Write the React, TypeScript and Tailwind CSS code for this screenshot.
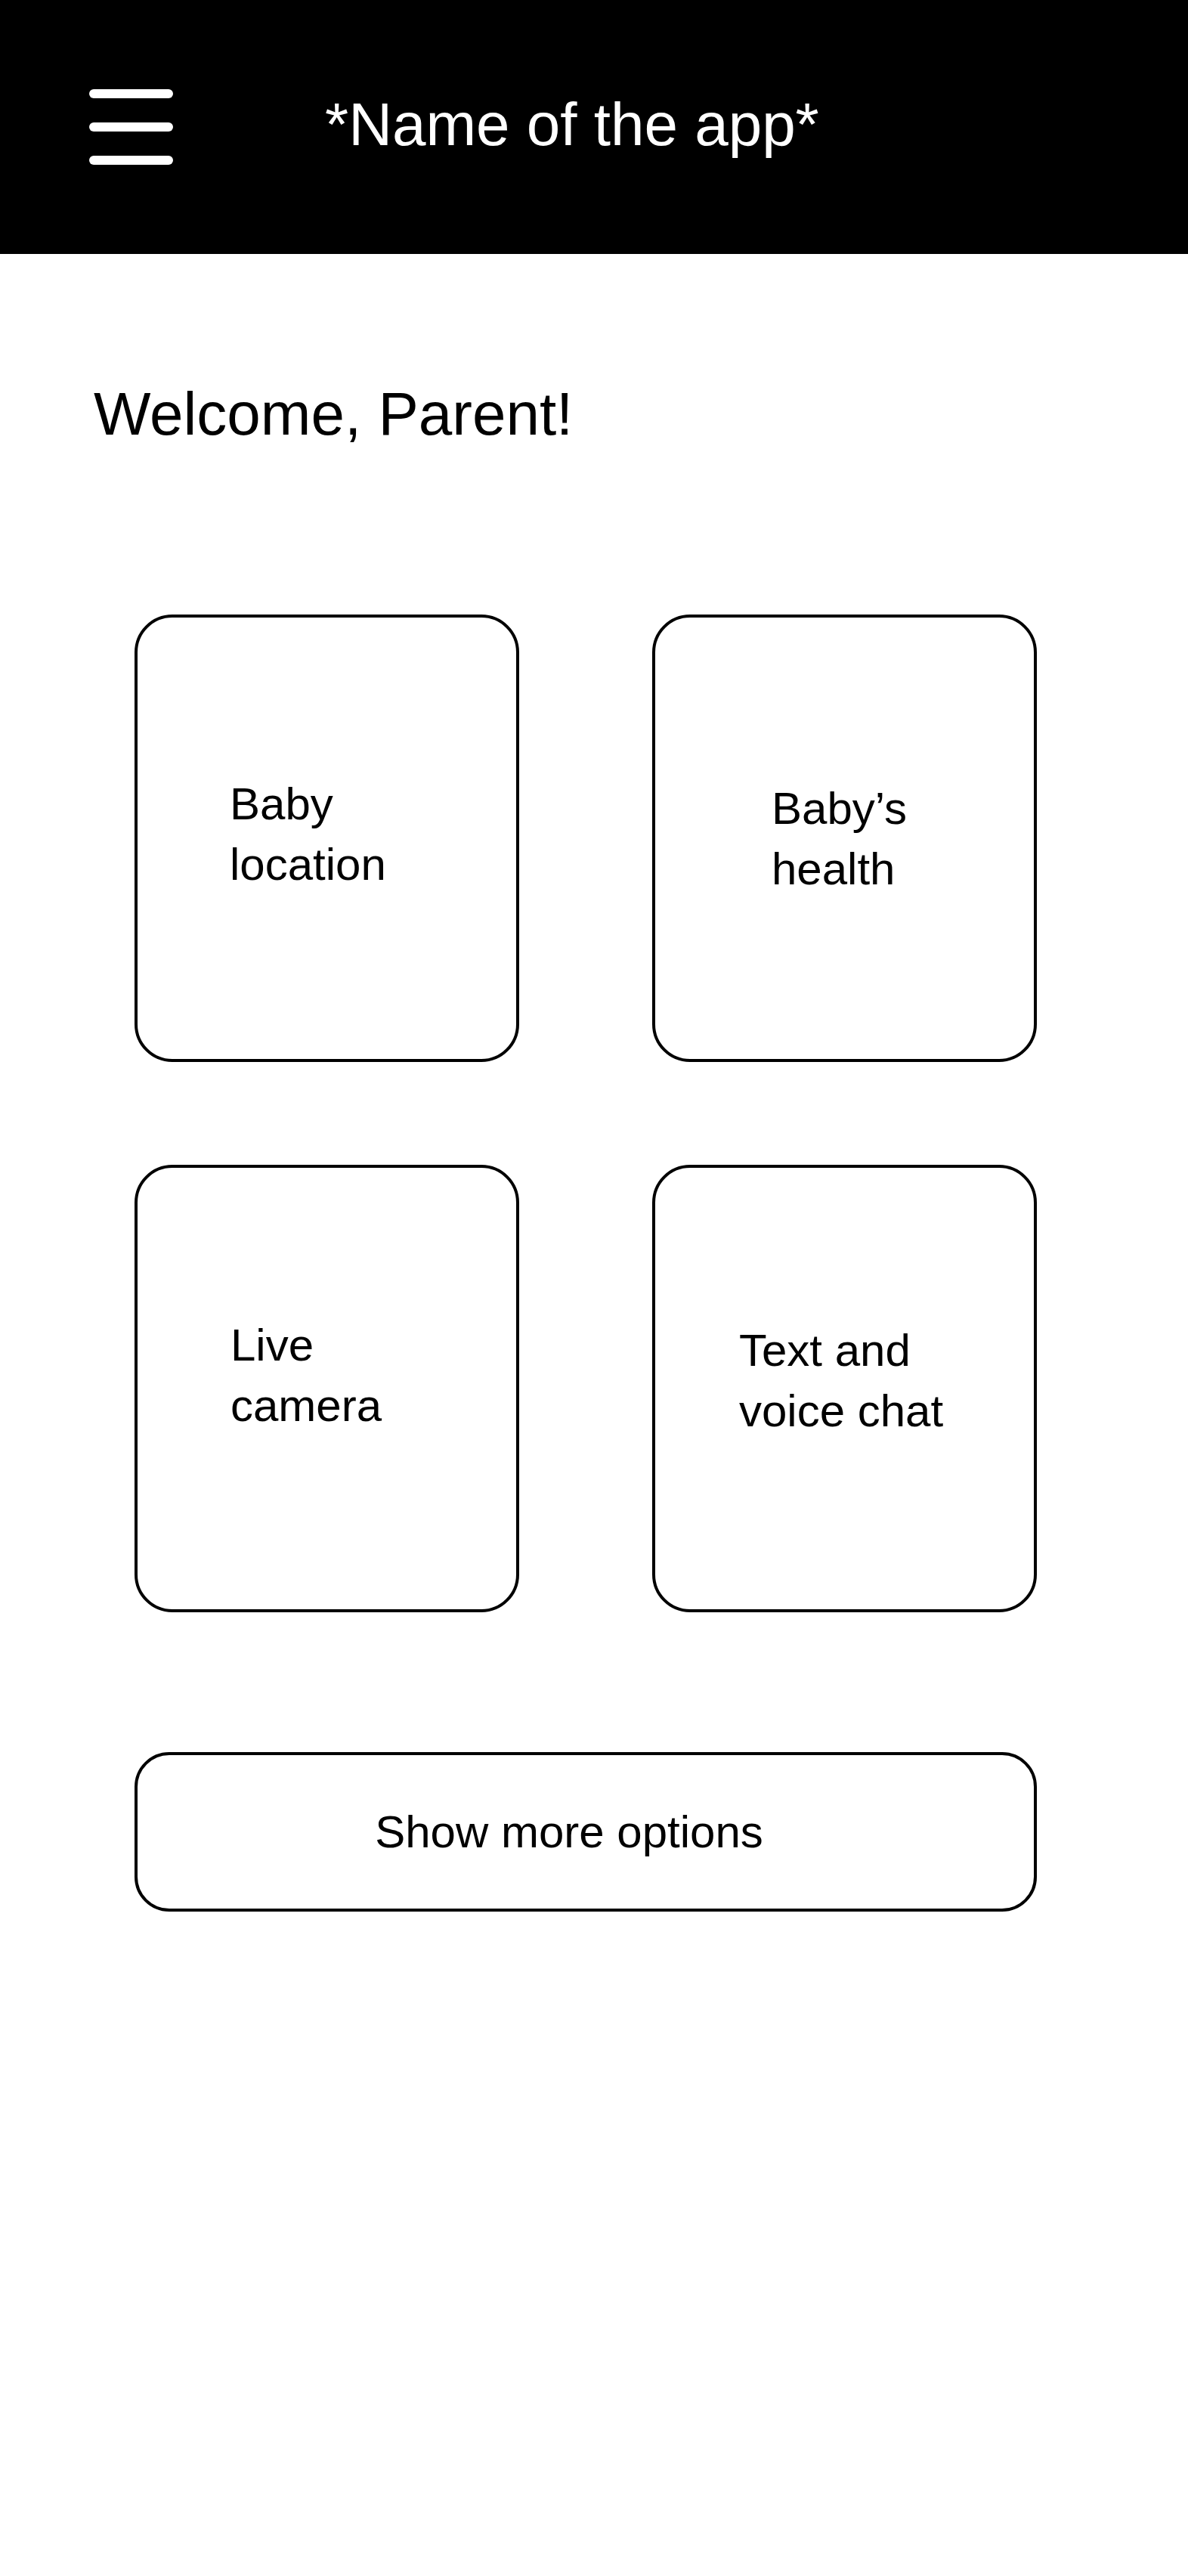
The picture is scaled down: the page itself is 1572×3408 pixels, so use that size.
import React from "react";

type Tile = {
  lines: string[];
  pad: string;
};

const tiles: Tile[] = [
  { lines: ["Baby", "location"], pad: "pt-[207px] pl-[122px]" },
  { lines: ["Baby’s", "health"], pad: "pt-[213px] pl-[154px]" },
  { lines: ["Live", "camera"], pad: "pt-[195px] pl-[123px]" },
  { lines: ["Text and", "voice chat"], pad: "pt-[202px] pl-[111px]" },
];

const MenuIcon = () => (
  <div className="flex flex-col gap-[32px] w-[111px]">
    <span className="block h-[12px] w-full rounded-full bg-white" />
    <span className="block h-[12px] w-full rounded-full bg-white" />
    <span className="block h-[12px] w-full rounded-full bg-white" />
  </div>
);

export default function App() {
  return (
    <div className="min-h-[3408px] w-[1572px] bg-white text-black font-['Liberation_Sans',Arial,sans-serif]">
      {/* Top bar */}
      <header className="h-[336px] bg-black flex items-center pl-[118px]">
        <MenuIcon />
        <h1 className="ml-[201px] mb-[7px] text-[80px] leading-none text-white">
          *Name of the app*
        </h1>
      </header>

      <main className="pl-[124px] pt-[172px]">
        <h2 className="text-[80px] leading-none">Welcome, Parent!</h2>

        <div className="ml-[54px] mt-[225px] w-[1194px]">
          <div className="grid grid-cols-[509px_509px] gap-x-[176px] gap-y-[136px]">
            {tiles.map((t) => (
              <button
                key={t.lines.join(" ")}
                className={`h-[592px] rounded-[50px] border-[4px] border-black bg-white text-left ${t.pad} flex flex-col justify-start`}
              >
                {t.lines.map((l) => (
                  <span key={l} className="block text-[60px] leading-[80px]">
                    {l}
                  </span>
                ))}
              </button>
            ))}
          </div>

          <button className="mt-[185px] h-[211px] w-full rounded-[46px] border-[4px] border-black bg-white flex items-center justify-center pr-[44px]">
            <span className="text-[60px] leading-none">Show more options</span>
          </button>
        </div>
      </main>
    </div>
  );
}
